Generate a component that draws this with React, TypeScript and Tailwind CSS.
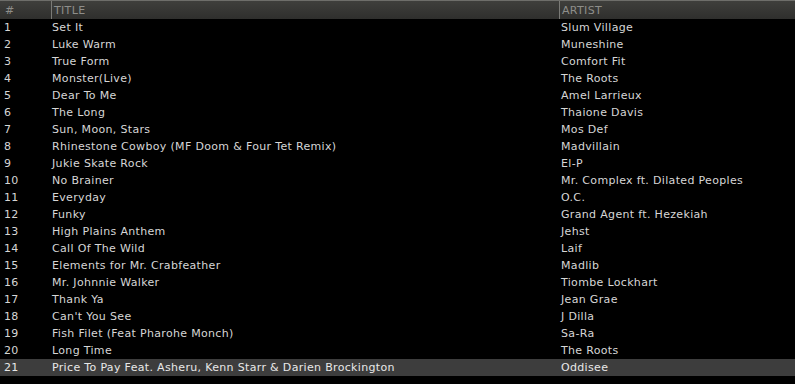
import React from "react";

type Track = { title: string; artist: string };

const tracks: Track[] = [
  { title: "Set It", artist: "Slum Village" },
  { title: "Luke Warm", artist: "Muneshine" },
  { title: "True Form", artist: "Comfort Fit" },
  { title: "Monster(Live)", artist: "The Roots" },
  { title: "Dear To Me", artist: "Amel Larrieux" },
  { title: "The Long", artist: "Thaione Davis" },
  { title: "Sun, Moon, Stars", artist: "Mos Def" },
  { title: "Rhinestone Cowboy (MF Doom & Four Tet Remix)", artist: "Madvillain" },
  { title: "Jukie Skate Rock", artist: "El-P" },
  { title: "No Brainer", artist: "Mr. Complex ft. Dilated Peoples" },
  { title: "Everyday", artist: "O.C." },
  { title: "Funky", artist: "Grand Agent ft. Hezekiah" },
  { title: "High Plains Anthem", artist: "Jehst" },
  { title: "Call Of The Wild", artist: "Laif" },
  { title: "Elements for Mr. Crabfeather", artist: "Madlib" },
  { title: "Mr. Johnnie Walker", artist: "Tiombe Lockhart" },
  { title: "Thank Ya", artist: "Jean Grae" },
  { title: "Can't You See", artist: "J Dilla" },
  { title: "Fish Filet (Feat Pharohe Monch)", artist: "Sa-Ra" },
  { title: "Long Time", artist: "The Roots" },
  { title: "Price To Pay Feat. Asheru, Kenn Starr & Darien Brockington", artist: "Oddisee" },
];

const selected = 20;

const App = () => {
  return (
    <div className="w-[795px] h-[384px] bg-black overflow-hidden font-['DejaVu_Sans',sans-serif] text-[11px] leading-none tracking-[0.33px]">
      {/* Header */}
      <div className="h-[19px] flex border-t border-[#6e6e6a] bg-gradient-to-b from-[#3f3f3c] to-[#2f2f2d] text-[#8e8e8a]">
        <div className="w-[51px] pl-[5px] flex items-center">#</div>
        <div className="w-[508px] flex items-center border-l border-[#7a7a76] pl-[2px]">TITLE</div>
        <div className="flex-1 flex items-center border-l border-[#7a7a76] pl-[2px]">ARTIST</div>
      </div>

      {/* Rows */}
      {tracks.map((track, i) => (
        <div
          key={i}
          className={`h-[17px] flex items-center text-[#d6d6d6] ${
            i === selected ? "bg-[#3d3d3d] text-[#e8e8e8]" : ""
          }`}
        >
          <div className="w-[52px] pl-[4px]">{i + 1}</div>
          <div className="w-[508px] whitespace-nowrap">{track.title}</div>
          <div className="flex-1 pl-[1px] whitespace-nowrap">{track.artist}</div>
        </div>
      ))}
    </div>
  );
};

export default App;
